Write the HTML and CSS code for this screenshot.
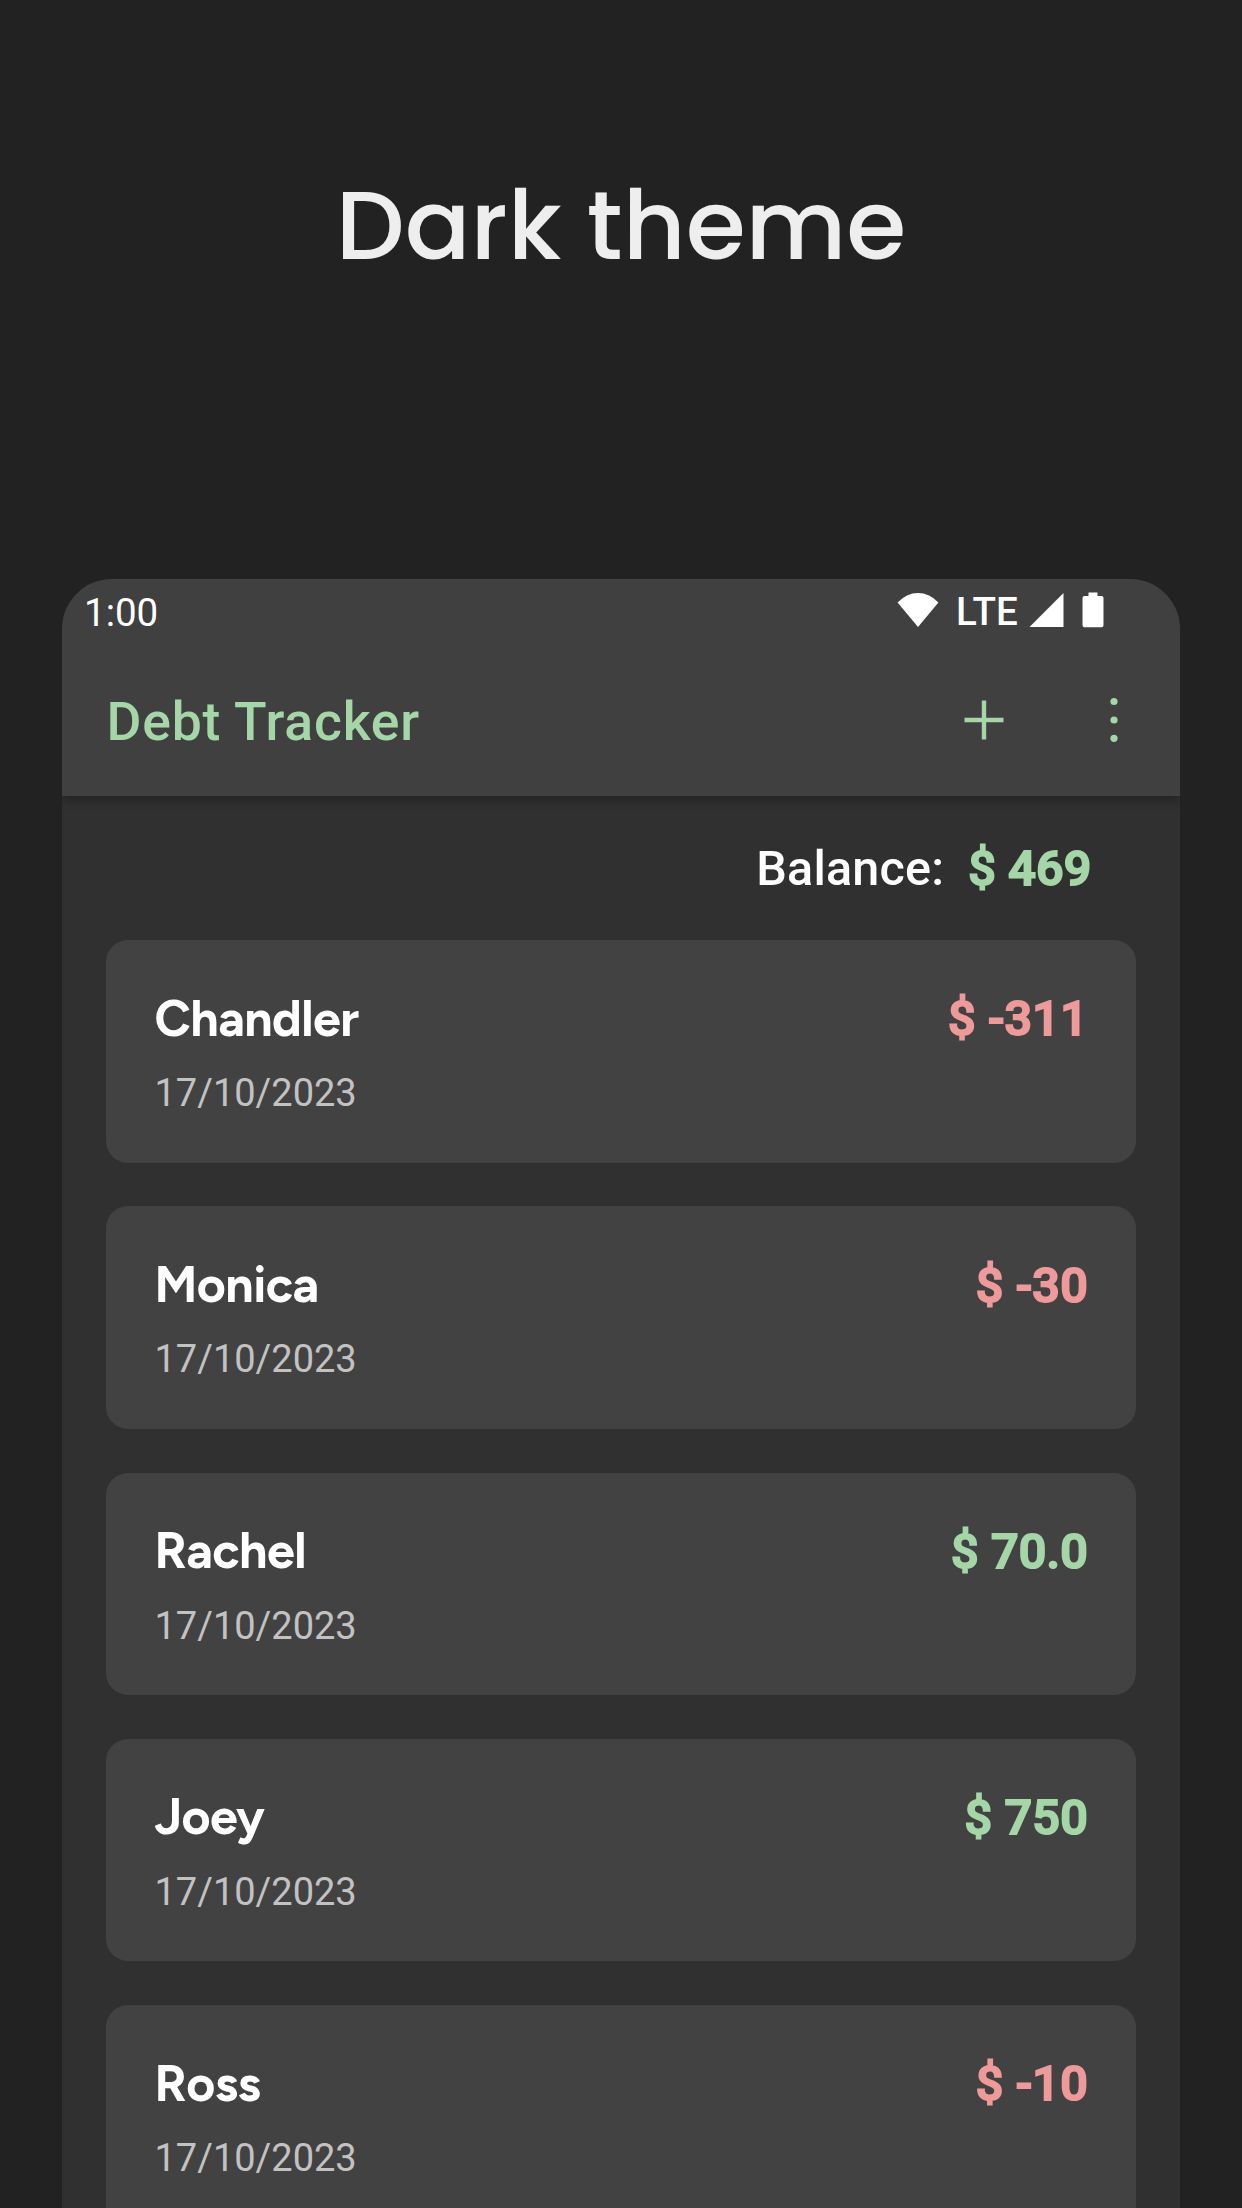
FILE: index.html
```html
<!DOCTYPE html>
<html lang="en">
<head>
<meta charset="utf-8">
<title>Debt Tracker</title>
<link rel="stylesheet" href="styles.css">
</head>
<body>
<h1 class="headline">Dark theme</h1>
<main class="phone">
  <header class="header">
    <div class="status">
      <span class="clock">1:00</span>
      <div class="indicators">
        <svg class="wifi" width="42" height="36" viewBox="0 0 42 36"><path d="M.6 10.500Q9.500 1 21 1T41.400 10.500L21 35Z" fill="#fff"/></svg>
        <span class="network">LTE</span>
        <svg class="signal" width="35" height="36" viewBox="0 0 35 36"><path d="M34.500 1V35H.5Z" fill="#fff"/></svg>
        <svg class="battery" width="22" height="36" viewBox="0 0 22 36"><path d="M6.500 .5h9V4H19.500a2 2 0 0 1 2 2V33.300a2 2 0 0 1-2 2H2.500a2 2 0 0 1-2-2V6a2 2 0 0 1 2-2H6.500Z" fill="#fff"/></svg>
      </div>
    </div>
    <div class="toolbar">
      <span class="title">Debt Tracker</span>
      <svg class="add" width="40" height="40" viewBox="0 0 40 40"><path d="M20 .5V39.500M.5 20H39.500" stroke="#a5d6a7" stroke-width="4.400"/></svg>
      <svg class="more" width="8" height="46" viewBox="0 0 8 46" fill="#a5d6a7"><circle cx="4" cy="4.500" r="3.600"/><circle cx="4" cy="23" r="3.600"/><circle cx="4" cy="41.300" r="3.600"/></svg>
    </div>
  </header>
  <div class="balance"><span class="balance-label">Balance:</span><span class="amount credit">$ 469</span></div>
  <section class="list">
    <article class="card"><div><div class="name">Chandler</div><div class="date">17/10/2023</div></div><span class="amount debt">$ -311</span></article>
    <article class="card"><div><div class="name">Monica</div><div class="date">17/10/2023</div></div><span class="amount debt">$ -30</span></article>
    <article class="card"><div><div class="name">Rachel</div><div class="date">17/10/2023</div></div><span class="amount credit">$ 70.0</span></article>
    <article class="card"><div><div class="name">Joey</div><div class="date">17/10/2023</div></div><span class="amount credit">$ 750</span></article>
    <article class="card"><div><div class="name">Ross</div><div class="date">17/10/2023</div></div><span class="amount debt">$ -10</span></article>
  </section>
</main>
</body>
</html>
```

FILE: styles.css
```css
* { box-sizing: border-box; }
html, body { margin: 0; height: 2208px; overflow: hidden; }
body {
  display: flex;
  flex-direction: column;
  background: #222;
  font-family: Roboto, sans-serif;
}
svg { display: block; flex: none; }
.headline {
  margin: 165px 0 0;
  height: 414px;
  flex: none;
  text-align: center;
  font: 500 97px/120px Poppins, Inter, sans-serif;
  color: #eee;
  white-space: nowrap;
}
.phone {
  width: 1118px;
  height: 1629px;
  flex: none;
  margin-left: 62px;
  overflow: hidden;
  border-radius: 50px 50px 0 0;
  background: #303030;
}
.header {
  height: 217px;
  background: #404040;
  box-shadow: 0 4px 10px rgba(0, 0, 0, .3);
}
.status {
  display: flex;
  justify-content: space-between;
  height: 84px;
  padding: 10px 76px 0 22px;
  color: #fff;
}
.clock { font-size: 38.5px; line-height: 48px; }
.indicators { display: flex; align-items: flex-start; }
.wifi, .signal, .battery { margin-top: 3px; }
.wifi { margin-right: 1px; }
.network { margin-left: 16px; font: 500 38.5px/46px Roboto, sans-serif; letter-spacing: .2px; }
.signal { margin-left: 10.5px; }
.battery { margin-left: 18.5px; }
.toolbar {
  display: flex;
  align-items: center;
  height: 114px;
  padding: 0 62px 0 44.5px;
}
.title {
  flex: 1;
  font-size: 53.5px;
  line-height: 60px;
  font-weight: 500;
  letter-spacing: .8px;
  padding-top: 3px;
  color: #a5d6a7;
}
.more { margin-left: 106.5px; }
.balance {
  display: flex;
  justify-content: flex-end;
  height: 144px;
  padding: 43px 88.5px 0 0;
  color: #fff;
}
.balance-label { font: 500 48.5px/60px Roboto, sans-serif; letter-spacing: .2px; margin-right: 24px; }
/* Medium face emboldened with an outline, which keeps the digits' advance widths */
.amount {
  font: 500 48.5px/60px Roboto, sans-serif;
  letter-spacing: .2px;
  -webkit-text-stroke: 2px currentColor;
  white-space: pre;
}
.credit { color: #a5d6a7; }
.debt { color: #ef9a9a; }
.list {
  display: flex;
  flex-direction: column;
  gap: 43.700px;
  padding: 0 43.600px 0 43.500px;
}
.card {
  display: flex;
  justify-content: space-between;
  flex: none;
  height: 222.600px;
  padding: 48.500px 48.500px 0 49px;
  border-radius: 22px;
  background: #424242;
}
.card .amount { margin-top: .8px; }
.name { font: 700 50px/60px Figtree, Lato, sans-serif; letter-spacing: -.55px; color: #fff; }
.date { margin-top: 20.5px; font-size: 38px; line-height: 48px; color: #c2c2c2; }
```
